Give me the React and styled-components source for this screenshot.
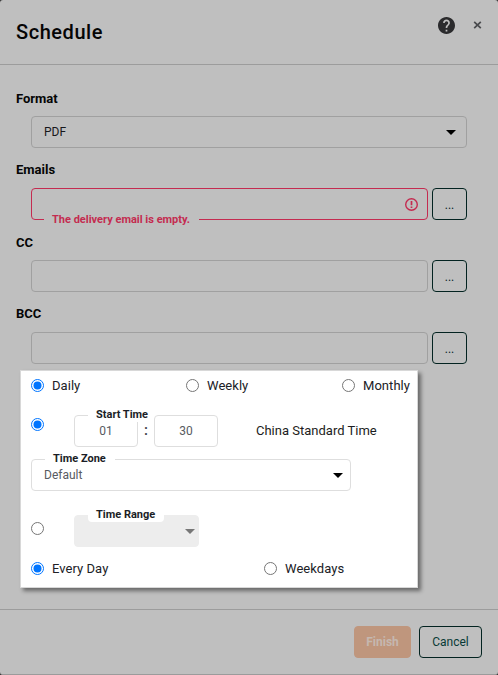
import React from 'react';
import styled, { createGlobalStyle, css } from 'styled-components';

const Global = createGlobalStyle`
  * { box-sizing: border-box; }
  body { margin: 0; background: #333; font-family: Roboto, sans-serif; font-size: 13px; color: #1c1d21; }
`;

const Dialog = styled.main`
  display: flex;
  flex-direction: column;
  width: 498px;
  height: 675px;
  background: #bfbfbf;
  border-bottom: 1px solid #9b9b9b;
  border-radius: 3px;
  overflow: hidden;
`;

const Header = styled.header`
  display: flex;
  justify-content: space-between;
  height: 65px;
  padding: 0 16px;
  border-bottom: 1px solid #9c9c9c;
`;

const Title = styled.h1`
  margin: 0;
  font-size: 20px;
  line-height: 65px;
  font-weight: 500;
  letter-spacing: 0.55px;
  color: #050505;
`;

const HeaderActions = styled.div`
  display: flex;
  align-items: center;
  gap: 18px;
  height: 50px;
`;

const Icon = styled.svg`
  display: block;
  flex: none;
`;

const Body = styled.div`
  display: flex;
  flex-direction: column;
  height: 544px;
  padding: 24px 16px 0;
`;

const Fields = styled.div`
  display: flex;
  flex-direction: column;
  gap: 13px;
`;

const Label = styled.div`
  height: 18px;
  margin-bottom: 9px;
  line-height: ${(p) => (p.$low ? 20 : 18)}px;
  font-weight: 700;
  color: #050505;
`;

const FieldRow = styled.div`
  display: flex;
  gap: 4px;
  width: 436px;
  margin-left: 15px;
`;

const Box = styled.div`
  position: relative;
  display: flex;
  align-items: center;
  justify-content: ${(p) => (p.$center ? 'center' : 'space-between')};
  flex: none;
  width: ${(p) => p.$width}px;
  height: 32px;
  padding: 0 ${(p) => (p.$center ? 0 : p.$right ?? 10)}px 0 ${(p) => (p.$center ? 0 : 12)}px;
  border: 1px solid ${(p) => p.$border || '#a0a0a0'};
  border-radius: 4px;
  font-size: 12px;
  color: ${(p) => p.$color || '#17181b'};
  ${(p) => p.$disabled && css`background: #ededed; border-color: #ededed;`}
`;

const Button = styled.button`
  flex: none;
  width: ${(p) => p.$width}px;
  height: 32px;
  padding: 0;
  border: 1px solid ${(p) => (p.$disabled ? '#bf967d' : '#032320')};
  border-radius: 4px;
  background: ${(p) => (p.$disabled ? '#bf967d' : 'transparent')};
  font: ${(p) => (p.$disabled ? 700 : 400)} 12px Roboto, sans-serif;
  color: ${(p) => (p.$disabled ? '#c5b8b0' : '#083a36')};
`;

const MoreButton = styled(Button)`
  color: #07211f;
  padding-top: 1px;
`;

const Message = styled.span`
  position: absolute;
  left: 12px;
  bottom: -9px;
  padding: 0 9px 0 8px;
  background: #bfbfbf;
  font-size: 11px;
  line-height: 16px;
  font-weight: 700;
  white-space: nowrap;
  color: #c42b50;
`;

const Legend = styled.span`
  position: absolute;
  left: ${(p) => p.$left}px;
  top: -10px;
  width: ${(p) => p.$width}px;
  height: 16px;
  padding-left: ${(p) => p.$pad}px;
  border-radius: 4px;
  background: #fff;
  font-size: 11px;
  line-height: 17px;
  font-weight: 700;
  white-space: nowrap;
  color: #1b1e26;
`;

const Panel = styled.section`
  width: 398px;
  height: 218px;
  margin: 6px 0 0 4px;
  padding: 1px 10px 0;
  border: 1px solid #d8d8d8;
  background: #fff;
  box-shadow: 3px 3px 4px rgba(0, 0, 0, 0.45);
`;

const OptionRow = styled.div`
  display: grid;
  grid-template-columns: ${(p) => p.$columns};
  align-items: center;
  height: 27px;
  margin-top: ${(p) => p.$top || 0}px;
`;

const Option = styled.label`
  display: flex;
  align-items: center;
  gap: 8px;
  white-space: nowrap;
  font-size: 13px;
  line-height: 18px;
  letter-spacing: 0.05px;
  color: #202126;
`;

const TimeRow = styled.div`
  display: flex;
  height: 32px;
  margin-top: ${(p) => p.$top}px;
`;

const RadioCell = styled.div`
  width: 43px;
  padding-top: ${(p) => p.$top}px;
`;

const Colon = styled.span`
  width: 16px;
  text-align: center;
  line-height: 31px;
  font-size: 15px;
  font-weight: 500;
  color: #3c414a;
`;

const ZoneText = styled.span`
  margin-left: 38px;
  line-height: 31px;
`;

const ZoneRow = styled.div`
  margin-top: 12px;
`;

const Footer = styled.footer`
  display: flex;
  justify-content: flex-end;
  gap: 8px;
  height: 65px;
  padding: 16px 16px 0;
  border-top: 1px solid #9c9c9c;
`;

function Radio({ checked }) {
  return (
    <Icon width="13" height="13" viewBox="0 0 13 13">
      <circle cx="6.5" cy="6.5" r="6" fill="#fff" stroke={checked ? '#0075ff' : '#767676'} />
      {checked && <circle cx="6.5" cy="6.5" r="4" fill="#0075ff" />}
    </Icon>
  );
}

function Caret({ color = '#000' }) {
  return (
    <Icon width="10" height="5" viewBox="0 0 10 5">
      <path d="M0 0h10L5 5z" fill={color} />
    </Icon>
  );
}

function Choice({ label, checked }) {
  return (
    <Option>
      <Radio checked={checked} />
      {label}
    </Option>
  );
}

function Recipients({ label, error, low }) {
  return (
    <div>
      <Label $low={low}>{label}</Label>
      <FieldRow>
        <Box $width={397} $border={error && '#c42b50'} $right={9}>
          <span />
          {error && (
            <>
              <Icon width="13" height="13" viewBox="0 0 13 13">
                <circle cx="6.5" cy="6.5" r="5.8" fill="none" stroke="#c42b50" strokeWidth="1.4" />
                <path d="M6.5 3v4.2M6.5 8.4v1.6" stroke="#c42b50" strokeWidth="1.7" />
              </Icon>
              <Message>{error}</Message>
            </>
          )}
        </Box>
        <MoreButton $width={35}>...</MoreButton>
      </FieldRow>
    </div>
  );
}

export default function App() {
  return (
    <>
      <Global />
      <Dialog>
        <Header>
          <Title>Schedule</Title>
          <HeaderActions>
            <Icon width="17" height="17" viewBox="2 2 20 20">
              <path
                fill="#2b2b2d"
                d="M12 2C6.48 2 2 6.48 2 12s4.48 10 10 10 10-4.48 10-10S17.52 2 12 2zm1 17h-2v-2h2v2zm2.07-7.75-.9.92C13.45 12.9 13 13.5 13 15h-2v-.5c0-1.1.45-2.1 1.17-2.83l1.24-1.26c.37-.36.59-.86.59-1.41 0-1.1-.9-2-2-2s-2 .9-2 2H8c0-2.21 1.79-4 4-4s4 1.79 4 4c0 .88-.36 1.68-.93 2.25z"
              />
            </Icon>
            <Icon width="9" height="8" viewBox="0 0 9 8">
              <path d="M1.2.8l6.6 6.4M7.8.8L1.2 7.2" stroke="#4a4b4e" strokeWidth="1.7" />
            </Icon>
          </HeaderActions>
        </Header>
        <Body>
          <Fields>
            <div>
              <Label $low>Format</Label>
              <FieldRow>
                <Box $width={436}>
                  PDF
                  <Caret />
                </Box>
              </FieldRow>
            </div>
            <Recipients label="Emails" error="The delivery email is empty." />
            <Recipients label="CC" low />
            <Recipients label="BCC" />
          </Fields>
          <Panel>
            <OptionRow $columns="155px 156px auto">
              <Choice label="Daily" checked />
              <Choice label="Weekly" />
              <Choice label="Monthly" />
            </OptionRow>
            <TimeRow $top={16}>
              <RadioCell $top={3}>
                <Radio checked />
              </RadioCell>
              <Box $width={64} $center $border="#dedede" $color="#585b61">
                01
                <Legend $left={13} $width={66} $pad={8}>Start Time</Legend>
              </Box>
              <Colon>:</Colon>
              <Box $width={64} $center $border="#dedede" $color="#585b61">30</Box>
              <ZoneText>China Standard Time</ZoneText>
            </TimeRow>
            <ZoneRow>
              <Box $width={320} $right={7} $border="#dedede" $color="#585b61">
                Default
                <Caret />
                <Legend $left={13} $width={70} $pad={8}>Time Zone</Legend>
              </Box>
            </ZoneRow>
            <TimeRow $top={24}>
              <RadioCell $top={7}>
                <Radio />
              </RadioCell>
              <Box $width={125} $right={3} $disabled>
                <span />
                <Caret color="#777" />
                <Legend $left={13} $width={76} $pad={8}>Time Range</Legend>
              </Box>
            </TimeRow>
            <OptionRow $columns="233px auto" $top={8}>
              <Choice label="Every Day" checked />
              <Choice label="Weekdays" />
            </OptionRow>
          </Panel>
        </Body>
        <Footer>
          <Button $width={57} $disabled>Finish</Button>
          <Button $width={63}>Cancel</Button>
        </Footer>
      </Dialog>
    </>
  );
}
